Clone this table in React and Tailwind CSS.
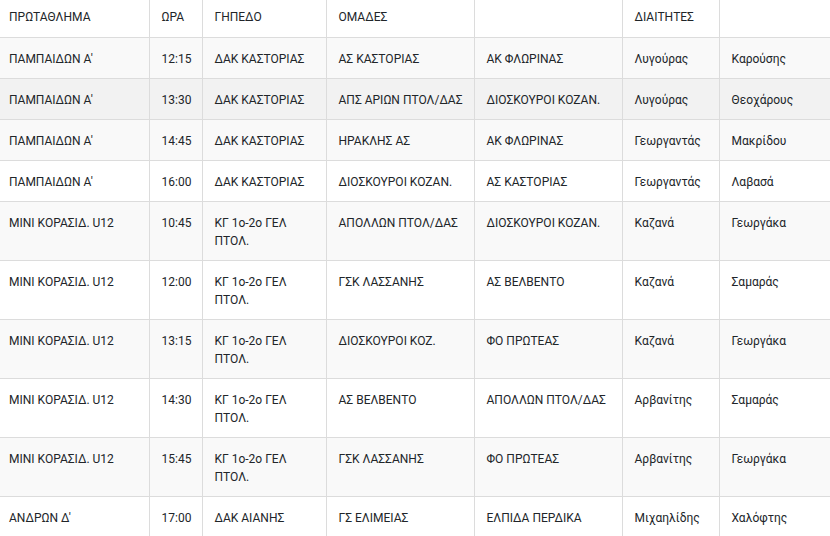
import React from "react";

const G = "ΚΓ 1ο-2ο ΓΕΛ\nΠΤΟΛ.";
const rows = [
  ["ΠΑΜΠΑΙΔΩΝ Α'", "12:15", "ΔΑΚ ΚΑΣΤΟΡΙΑΣ", "ΑΣ ΚΑΣΤΟΡΙΑΣ", "ΑΚ ΦΛΩΡΙΝΑΣ", "Λυγούρας", "Καρούσης"],
  ["ΠΑΜΠΑΙΔΩΝ Α'", "13:30", "ΔΑΚ ΚΑΣΤΟΡΙΑΣ", "ΑΠΣ ΑΡΙΩΝ ΠΤΟΛ/ΔΑΣ", "ΔΙΟΣΚΟΥΡΟΙ ΚΟΖΑΝ.", "Λυγούρας", "Θεοχάρους"],
  ["ΠΑΜΠΑΙΔΩΝ Α'", "14:45", "ΔΑΚ ΚΑΣΤΟΡΙΑΣ", "ΗΡΑΚΛΗΣ ΑΣ", "ΑΚ ΦΛΩΡΙΝΑΣ", "Γεωργαντάς", "Μακρίδου"],
  ["ΠΑΜΠΑΙΔΩΝ Α'", "16:00", "ΔΑΚ ΚΑΣΤΟΡΙΑΣ", "ΔΙΟΣΚΟΥΡΟΙ ΚΟΖΑΝ.", "ΑΣ ΚΑΣΤΟΡΙΑΣ", "Γεωργαντάς", "Λαβασά"],
  ["ΜΙΝΙ ΚΟΡΑΣΙΔ. U12", "10:45", G, "ΑΠΟΛΛΩΝ ΠΤΟΛ/ΔΑΣ", "ΔΙΟΣΚΟΥΡΟΙ ΚΟΖΑΝ.", "Καζανά", "Γεωργάκα"],
  ["ΜΙΝΙ ΚΟΡΑΣΙΔ. U12", "12:00", G, "ΓΣΚ ΛΑΣΣΑΝΗΣ", "ΑΣ ΒΕΛΒΕΝΤΟ", "Καζανά", "Σαμαράς"],
  ["ΜΙΝΙ ΚΟΡΑΣΙΔ. U12", "13:15", G, "ΔΙΟΣΚΟΥΡΟΙ ΚΟΖ.", "ΦΟ ΠΡΩΤΕΑΣ", "Καζανά", "Γεωργάκα"],
  ["ΜΙΝΙ ΚΟΡΑΣΙΔ. U12", "14:30", G, "ΑΣ ΒΕΛΒΕΝΤΟ", "ΑΠΟΛΛΩΝ ΠΤΟΛ/ΔΑΣ", "Αρβανίτης", "Σαμαράς"],
  ["ΜΙΝΙ ΚΟΡΑΣΙΔ. U12", "15:45", G, "ΓΣΚ ΛΑΣΣΑΝΗΣ", "ΦΟ ΠΡΩΤΕΑΣ", "Αρβανίτης", "Γεωργάκα"],
  ["ΑΝΔΡΩΝ Δ'", "17:00", "ΔΑΚ ΑΙΑΝΗΣ", "ΓΣ ΕΛΙΜΕΙΑΣ", "ΕΛΠΙΔΑ ΠΕΡΔΙΚΑ", "Μιχαηλίδης", "Χαλόφτης"],
];

const headers = ["ΠΡΩΤΑΘΛΗΜΑ", "ΩΡΑ", "ΓΗΠΕΔΟ", "ΟΜΑΔΕΣ", "", "ΔΙΑΙΤΗΤΕΣ", ""];

export default function App() {
  return (
    <div className="w-[830px] h-[536px] overflow-hidden bg-white text-[#212529] text-[12px] leading-[18px] font-['Roboto','Liberation_Sans',sans-serif]">
      <table className="w-[830px] table-fixed border-collapse">
        <colgroup>
          <col className="w-[149px]" />
          <col className="w-[53px]" />
          <col className="w-[124px]" />
          <col className="w-[148px]" />
          <col className="w-[148px]" />
          <col className="w-[97px]" />
          <col className="w-[111px]" />
        </colgroup>
        <thead>
          <tr className="border-b border-[#dcdcdc]">
            {headers.map((h, i) => (
              <th
                key={i}
                className={`text-left font-normal align-top pt-[8px] pb-[11px] whitespace-nowrap ${i === 0 ? "pl-[9px]" : "pl-[12px] border-l border-[#dcdcdc]"}`}
              >
                {h}
              </th>
            ))}
          </tr>
        </thead>
        <tbody>
          {rows.map((r, ri) => (
            <tr
              key={ri}
              className={`border-b border-[#dcdcdc] ${ri === 1 ? "bg-[#f2f2f2]" : ri % 2 === 0 ? "bg-[#f9f9f9]" : "bg-white"}`}
            >
              {r.map((c, ci) => (
                <td
                  key={ci}
                  className={`align-top pt-[12px] pb-[10px] whitespace-pre ${ci === 0 ? "pl-[9px]" : "pl-[12px] border-l border-[#dcdcdc]"}`}
                >
                  {c}
                </td>
              ))}
            </tr>
          ))}
        </tbody>
      </table>
    </div>
  );
}
